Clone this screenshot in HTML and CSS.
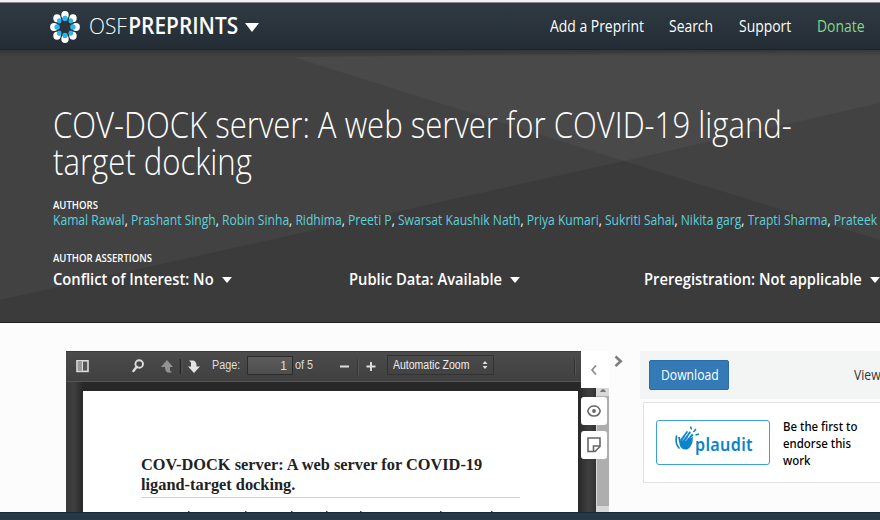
FILE: index.html
```html
<!DOCTYPE html>
<html lang="en">
<head>
<meta charset="utf-8">
<title>OSF Preprints | COV-DOCK server</title>
<link rel="stylesheet" href="styles.css">
</head>
<body>
<header class="navbar">
  <a class="brand">
    <svg class="logo" width="30" height="34" viewBox="0 0 30 34">
      <g fill="#fff"><ellipse cx="15" cy="5" rx="3.700" ry="4"/><ellipse cx="23" cy="8.300" rx="3.700" ry="4"/><ellipse cx="26" cy="17" rx="3.900" ry="4"/><ellipse cx="23" cy="25.700" rx="3.700" ry="4"/><ellipse cx="15" cy="29" rx="3.700" ry="4"/><ellipse cx="7" cy="25.700" rx="3.700" ry="4"/><ellipse cx="4" cy="17" rx="3.900" ry="4"/><ellipse cx="7" cy="8.300" rx="3.700" ry="4"/></g>
      <g fill="#2fb4e9"><ellipse cx="15" cy="8.500" rx="2.700" ry="2.700"/><ellipse cx="20.800" cy="10.800" rx="2.300" ry="2.600"/><ellipse cx="22.900" cy="17" rx="2.700" ry="2.700"/><ellipse cx="20.800" cy="23.200" rx="2.300" ry="2.600"/><ellipse cx="15" cy="25.500" rx="2.700" ry="2.700"/><ellipse cx="9.200" cy="23.200" rx="2.300" ry="2.600"/><ellipse cx="7.100" cy="17" rx="2.700" ry="2.700"/><ellipse cx="9.200" cy="10.800" rx="2.300" ry="2.600"/></g>
    </svg>
    <span class="brand-name"><span class="fit fit-brand"><span class="thin">OSF</span><b>PREPRINTS</b></span></span>
    <svg class="brand-caret" width="14" height="9" viewBox="0 0 14 9"><path d="M0 0H14L7 9Z" fill="#fff"/></svg>
  </a>
  <nav class="links">
    <a class="fit">Add a Preprint</a><a class="fit">Search</a><a class="fit">Support</a><a class="fit donate">Donate</a>
  </nav>
</header>
<section class="hero">
  <svg class="facets" width="880" height="272" viewBox="0 0 880 272">
    <path d="M293 7L880 0V53L624 111Z" fill="#494949"/>
    <path d="M0 250L624 111L880 190V272H0Z" fill="#3b3b3b"/>
  </svg>
  <div class="hero-body">
    <h1><span class="fit fit-title">COV-DOCK server: A web server for COVID-19 ligand-<br>target docking</span></h1>
    <h2 class="label"><span class="fit fit-label">AUTHORS</span></h2>
    <p class="authors"><span class="fit fit-authors"><a>Kamal Rawal</a>, <a>Prashant Singh</a>, <a>Robin Sinha</a>, <a>Ridhima</a>, <a>Preeti P</a>, <a>Swarsat Kaushik Nath</a>, <a>Priya Kumari</a>, <a>Sukriti Sahai</a>, <a>Nikita garg</a>, <a>Trapti Sharma</a>, <a>Prateek</a></span></p>
    <h2 class="label second"><span class="fit fit-label2">AUTHOR ASSERTIONS</span></h2>
    <div class="assertions">
      <div class="assertion a1"><span class="box"><span class="fit">Conflict of Interest: No</span></span><i class="caret"></i></div>
      <div class="assertion a2"><span class="box"><span class="fit">Public Data: Available</span></span><i class="caret"></i></div>
      <div class="assertion a3"><span class="box"><span class="fit">Preregistration: Not applicable</span></span><i class="caret"></i></div>
    </div>
  </div>
</section>
<main class="content">
  <section class="viewer">
    <div class="toolbar">
      <svg class="tools" width="142" height="30" viewBox="0 0 142 30">
        <rect x="11" y="9.8" width="11" height="10.6" fill="#555" stroke="#ddd" stroke-width="1.6"/><path d="M12 10h4v10h-4z" fill="#999"/><path d="M16.5 10v10" stroke="#ddd"/>
        <circle cx="73.2" cy="13" r="3.8" fill="none" stroke="#ddd" stroke-width="1.9"/><path d="M70.8 15.7L67.4 20" stroke="#ddd" stroke-width="2.4" stroke-linecap="round"/>
        <path d="M101 9L107 16H104V19.5L106 21.5H101.5Q99 20 99 17V16H95Z" fill="#929292"/>
        <path d="M114.500 8v15" stroke="#292929" stroke-width="1.500"/><path d="M116 8v15" stroke="#555"/>
        <path d="M128 22L122 15.500H125V11.500L123 9.500H127.500Q130.500 11 130.500 14V15.500H134Z" fill="#e2e2e2"/>
      </svg>
      <span class="page-word"><span class="fit">Page:</span></span>
      <span class="page-input">1</span>
      <span class="page-total"><span class="fit">of 5</span></span>
      <svg class="zoomers" width="72" height="30" viewBox="0 0 72 30"><path d="M25 15.500h9M51.500 15.500h9M56 11v9" stroke="#ddd" stroke-width="1.900"/><path d="M42.500 8v16" stroke="#373737"/><path d="M43.500 8v16" stroke="#575757"/></svg>
      <span class="zoom-select"><span class="fit">Automatic Zoom</span><svg width="6" height="8" viewBox="0 0 6 8"><path d="M.5 3L3 0L5.500 3ZM.5 5L3 8L5.500 5Z" fill="#ddd"/></svg></span>
      <i class="tool-end"></i>
    </div>
    <div class="page">
      <h3><span class="fit">COV-DOCK server: A web server for COVID-19<br>ligand-target docking.</span></h3>
      <svg class="peek" width="378" height="2" viewBox="0 0 378 2"><path d="M47 1.500h1.500M104 1.500h1.500M150 1.500h1.500M185 1.500h1.500M219 1.500h1.500M299 1.500h1.500M350 1.500h1.500" stroke="#444"/></svg>
    </div>
    <div class="scrollbar"><svg width="6" height="3" viewBox="0 0 6 3"><path d="M0 3Q3-3 6 3Z" fill="#777"/></svg><i class="thumb"></i></div>
    <div class="annotator">
      <div class="collapse"><svg width="8" height="12" viewBox="0 0 8 12"><path d="M6 1.500L2 6L6 10.500" fill="none" stroke="#888" stroke-width="1.700"/></svg></div>
      <div class="tab"><svg width="14" height="12" viewBox="0 0 14 12"><path d="M.8 6Q2 1 7 1T13.200 6Q12 11 7 11T.8 6Z" fill="none" stroke="#666" stroke-width="1.500"/><circle cx="7" cy="6" r="1.900" fill="#666"/></svg></div>
      <div class="tab"><svg width="14" height="16" viewBox="0 0 14 16"><path d="M1 1H13V9.500L8 14.500H1ZM6.500 14V9H13" fill="none" stroke="#666" stroke-width="1.600"/></svg></div>
    </div>
  </section>
  <svg class="expand" width="9" height="13" viewBox="0 0 9 13"><path d="M1.500 1.500L6.700 6.300L1.500 11.100" fill="none" stroke="#7d7d7d" stroke-width="2.600"/></svg>
  <aside class="side">
    <div class="download-bar"><a class="download"><span class="fit">Download</span></a><span class="views"><span class="fit">View</span></span></div>
    <div class="endorse">
      <a class="plaudit">
        <svg width="26" height="26" viewBox="0 0 26 26"><path d="M4 11L6 20Q9 25 14 23Q17 21 18.500 16L19 10L16.500 13L18.500 7L13.500 13L16 5L10 12L13 5L6.500 15L6 11Z" fill="#0b84cc"/><path d="M2.500 10Q1 18 5 22M7 14L13 6M9.500 14.500L16 6.500M12 15.500L18.500 9" fill="none" stroke="#0b84cc" stroke-width="1.700" stroke-linecap="round"/><path d="M8.500 14.500L13.500 8M11.500 15L16.500 8.500" stroke="#fff" stroke-width=".6"/><path d="M16.500 .5L17.500 3.500M22 3L19.500 6M25 8L21.500 9" stroke="#0b84cc" stroke-width="1.500"/></svg>
        <span class="fit">plaudit</span>
      </a>
      <p><span class="fit">Be the first to<br>endorse this<br>work</span></p>
    </div>
  </aside>
</main>
<footer class="footer"></footer>
</body>
</html>
```
FILE: styles.css
```css
* { box-sizing: border-box; }
body { margin: 0; width: 880px; height: 520px; overflow: hidden; display: flex; flex-direction: column; background: #fcfcfc; font-family: "Open Sans", sans-serif; }
h1, h2, h3, p { margin: 0; }
svg { display: block; flex: none; }
.fit { display: inline-block; white-space: nowrap; transform-origin: 0 50%; }

.navbar { height: 50px; flex: none; display: flex; align-items: center; border-top: 2px solid #f2f2f2; border-bottom: 1px solid #1c242b; background: linear-gradient(#86898d 0 1px, #303a42 1px, #242d35); color: #fff; }
.brand { display: flex; align-items: center; padding-left: 50px; width: 550px; }
.logo { margin-top: 2px; }
.brand-name { width: 156px; margin-left: 9px; margin-top: 1px; font-size: 22.5px; line-height: 46px; }
.brand-name .thin { font-weight: 300; margin-right: 1.5px; }
.brand-name b { font-weight: 600; }
.brand-caret { margin-top: 3px; }
.fit-brand { transform: scaleX(.928); }
.links { display: grid; grid-template-columns: 119px 70px 78px 63px; font-size: 16px; line-height: 46px; }
.links .fit { transform: scaleX(.87); justify-self: start; }
.donate { color: #83d68a; }

.hero { height: 273px; flex: none; position: relative; background: #424242; border-bottom: 1px solid #222; color: #fff; }
.facets { position: absolute; left: 0; top: 0; }
.hero-body { position: relative; height: 272px; padding: 56px 0 0 53px; background: linear-gradient(rgba(30, 30, 30, .35), transparent 7px); }
h1 { font-size: 36px; font-weight: 300; line-height: 37px; height: 74px; }
.fit-title { transform: scaleX(.864); }
.label { font-size: 11px; font-weight: 600; line-height: 14px; height: 14px; margin-top: 18px; }
.fit-label { transform: scaleX(.87); }
.fit-label2 { transform: scaleX(.87); }
.authors { font-size: 14px; line-height: 16px; height: 16px; width: 827px; overflow-x: clip; }
.authors a { color: #5fd0dc; }
.fit-authors { transform: scaleX(.8645); }
.label.second { margin-top: 23px; }
.assertions { display: grid; grid-template-columns: 296px 295px 236px; font-size: 16px; font-weight: 600; line-height: 28px; }
.assertion { display: flex; align-items: center; }
.assertion .fit { transform: scaleX(.92); }
.a1 .box { width: 169px; }
.a2 .box { width: 161px; }
.a3 .box { width: 226px; }
.caret { flex: none; border: 5px solid transparent; border-top: 6px solid #fff; border-bottom: 0; margin-top: 1px; }

.content { height: 189px; flex: none; display: flex; padding: 28px 0 0 66px; }
.viewer { position: relative; width: 543px; height: 161px; flex: none; background: linear-gradient(90deg, #383838, #404040 8px, #282828 17px, #282828 512px, #404040 523px, #333 530px); }
.toolbar { width: 515px; height: 31px; display: flex; align-items: center; background: linear-gradient(#4b4b4b, #404040); border-top: 1px solid #3b3b3b; border-bottom: 1px solid #565656; color: #ddd; font: 12px/28px "Liberation Sans", sans-serif; }
.tools, .zoomers { margin-top: -1px; }
.page-word { width: 35px; margin: -3px 0 0 4px; }
.page-input { width: 46px; height: 19px; margin-top: -2px; border: 1px solid #2b2b2b; background: linear-gradient(#5c5c5c, #4e4e4e); line-height: 18px; text-align: right; padding-right: 5px; }
.page-total { width: 20px; margin: -3px 0 0 2px; }
.toolbar .fit { transform: scaleX(.9); }
.zoom-select { width: 107px; height: 20px; margin-top: -4px; border: 1px solid #333; display: flex; justify-content: space-between; align-items: center; padding: 0 5px 0 5px; color: #eee; line-height: 18px; }
.zoom-select .fit { transform: scaleX(.875); }
.tool-end { width: 2px; height: 16px; margin-left: 80px; border-left: 1px solid #2f2f2f; border-right: 1px solid #565656; }
.page { width: 495px; height: 121px; margin: 9px 0 0 17px; background: #fff; padding: 64px 58px 0; }
.page h3 { height: 43px; border-bottom: 1px solid #c9d3dc; color: #222; font: bold 17px/20px "Liberation Serif", serif; }
.page h3 .fit { transform: scaleX(.961); }
.peek { margin-top: 12px; }
.scrollbar { position: absolute; left: 530px; top: 37px; width: 13px; height: 124px; background: #d8d8d8; display: flex; flex-direction: column; align-items: center; padding-top: 1px; }
.thumb { width: 12px; height: 110px; margin-top: 4px; background: #aeaeae; }
.annotator { position: absolute; left: 515px; top: 0; width: 28px; }
.collapse { height: 37px; background: #fff; padding: 13px 0 0 9px; }
.tab { width: 26px; height: 28px; margin-top: 9px; border-radius: 3px; background: #fff; display: flex; align-items: center; justify-content: center; }
.tab + .tab { margin-top: 6px; }
.expand { margin: 4px 17px 0 5px; }
.side { width: 240px; flex: none; }
.download-bar { height: 48px; background: #f3f5f5; display: flex; align-items: center; padding-left: 9px; width: 240px; }
.download { width: 80px; height: 30px; padding-left: 11px; background: #337ab7; border: 1px solid #2c6ca5; border-radius: 2px; color: #fff; font-size: 14px; line-height: 28px; }
.download .fit { transform: scaleX(.87); }
.views { margin: -2px 0 0 125px; width: 26px; font-size: 14px; color: #333; }
.views .fit { transform: scaleX(.87); }
.endorse { width: 237px; height: 81px; margin: 3px 0 0 3px; border: 1px solid #e2e2e2; border-right: 0; background: #fff; display: flex; align-items: center; padding-left: 12px; }
.plaudit { width: 114px; height: 45px; flex: none; border: 1px solid #3a9fdb; border-radius: 3px; display: flex; padding: 5px 0 0 17px; color: #0b84cc; font: 600 18.5px/36px "Noto Sans", sans-serif; }
.plaudit .fit { transform: scaleX(.87); margin-left: -5px; letter-spacing: .4px; }
.endorse p { margin-left: 13px; color: #000; font: 500 13px/17px "Noto Sans", sans-serif; }
.endorse p .fit { transform: translateY(.5px) scaleX(.88); }
.footer { height: 8px; flex: none; background: #263947; border-top: 1px solid #182a36; }
```
